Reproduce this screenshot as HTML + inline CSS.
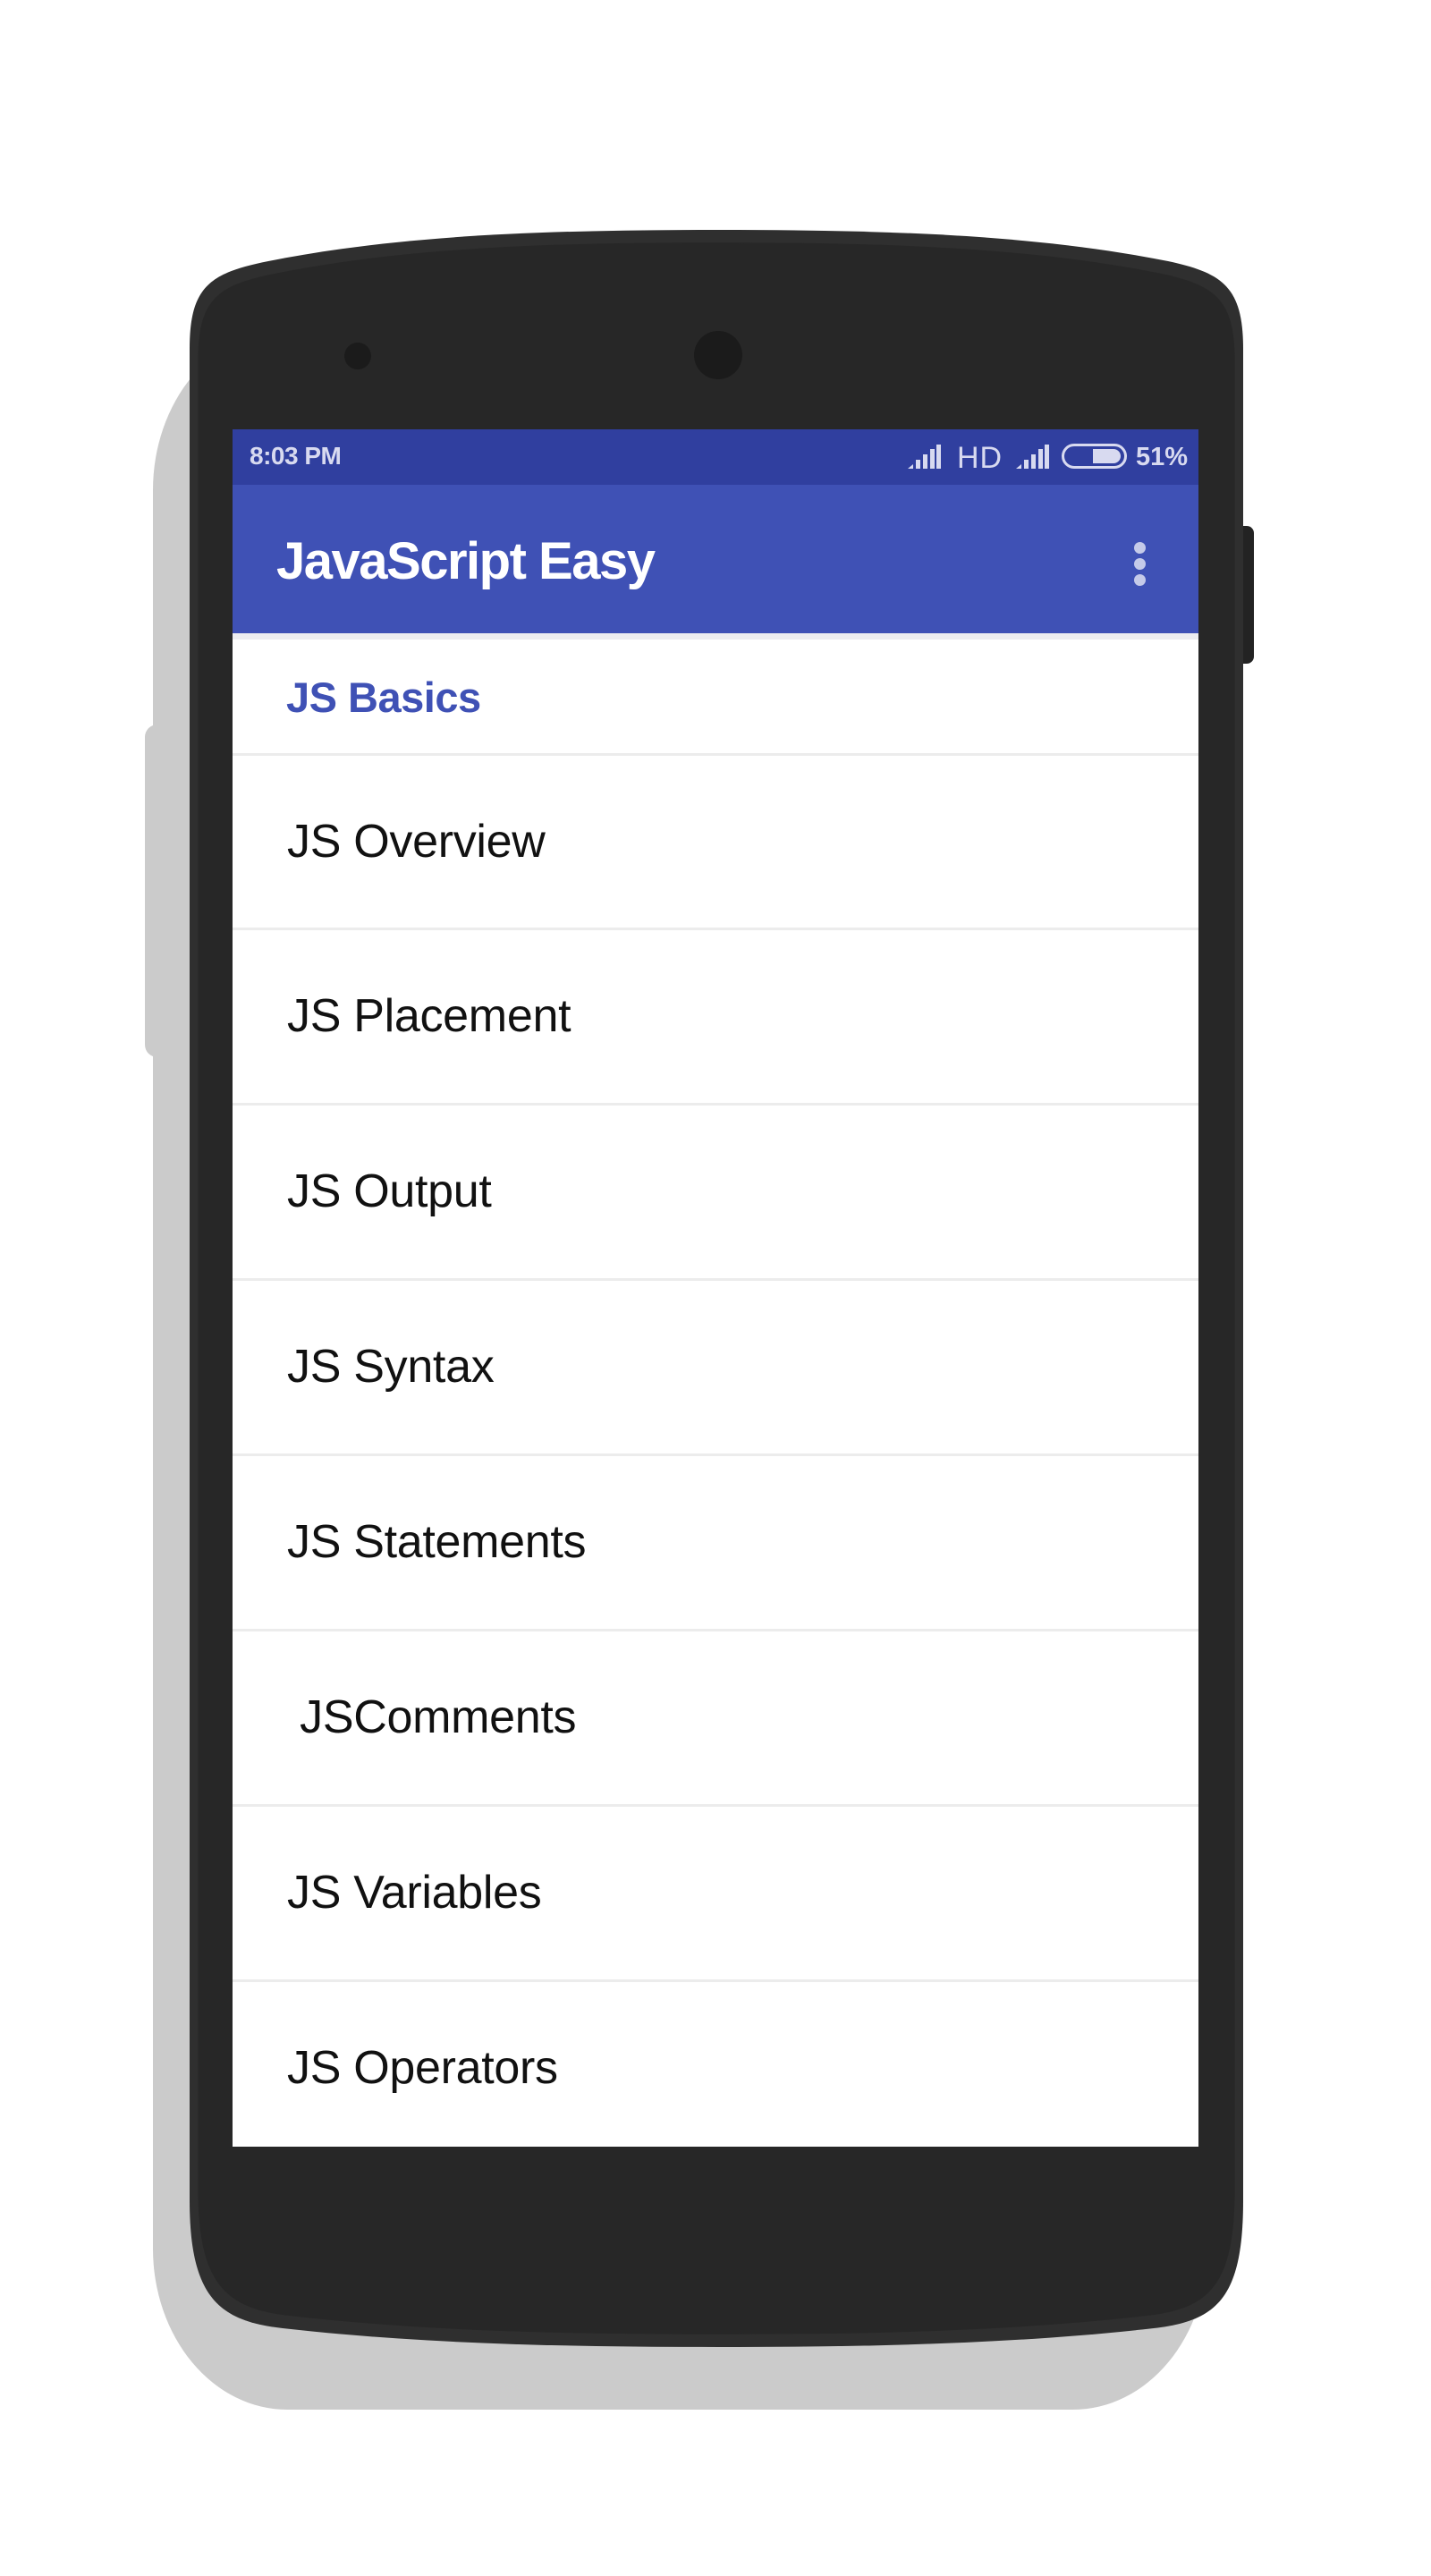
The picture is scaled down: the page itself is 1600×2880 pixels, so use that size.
<!DOCTYPE html>
<html><head><meta charset="utf-8"><style>
*{margin:0;padding:0;box-sizing:border-box}
body{width:1600px;height:2880px;background:#fff;position:relative;overflow:hidden;font-family:"Liberation Sans",sans-serif}
.abs{position:absolute}
.shtab{left:162px;top:810px;width:40px;height:372px;background:#cbcbcb;border-radius:14px}
.btnL{left:202px;top:745px;width:14px;height:368px;background:#232323;border-radius:8px 0 0 8px}
.btnR{left:1388px;top:588px;width:14px;height:154px;background:#232323;border-radius:0 8px 8px 0}
.screen{left:260px;top:480px;width:1080px;height:1920px;background:#fff;overflow:hidden}
.status{position:absolute;left:0;top:0;width:1080px;height:62px;background:#303f9f;color:#d8daf0}
.appbar{position:absolute;left:0;top:62px;width:1080px;height:166px;background:#3f51b5}
.row{position:absolute;left:0;width:1080px;height:196px;border-top:3px solid #ececec;font-size:52px;color:#111;line-height:193px;padding-left:61px;letter-spacing:-0.3px}
</style></head><body>
<div class="abs shtab"></div>
<div class="abs btnL"></div>
<div class="abs btnR"></div>
<svg class="abs" style="left:0;top:0" width="1600" height="2880" viewBox="0 0 1600 2880">
<rect x="171" y="368" width="1179" height="2326" rx="150" ry="180" fill="#cbcbcb"/>
<path d="M212,390 C212,320 235,305 300,292 C450,262 620,257 803,257 C986,257 1156,262 1306,292 C1366,305 1390,320 1390,390 L1390,2460 C1390,2570 1360,2595 1290,2603 C1140,2620 980,2624 803,2624 C626,2624 466,2620 316,2603 C246,2595 212,2570 212,2460 Z" fill="#2f2f2f"/>
<path d="M212,390 C212,320 235,305 300,292 C450,262 620,257 803,257 C986,257 1156,262 1306,292 C1366,305 1390,320 1390,390 L1390,2460 C1390,2570 1360,2595 1290,2603 C1140,2620 980,2624 803,2624 C626,2624 466,2620 316,2603 C246,2595 212,2570 212,2460 Z" fill="#272727" transform="translate(801,1440) scale(0.984,0.988) translate(-801,-1440)"/>
<circle cx="400" cy="398" r="15" fill="#1b1b1b"/>
<circle cx="803" cy="397" r="27" fill="#1b1b1b"/>
</svg>
<div class="abs screen">
 <div class="status">
  <div class="abs" style="left:19px;top:14px;font-size:28px;font-weight:bold;letter-spacing:-0.5px">8:03 PM</div>
  <svg class="abs" style="left:755px;top:17px" width="40" height="28" viewBox="0 0 40 28"><g fill="#d8daf0"><polygon points="0,27 6,22 6,27"/><rect x="9" y="17" width="5" height="10"/><rect x="17" y="11" width="5" height="16"/><rect x="25" y="5" width="5" height="22"/><rect x="32" y="0" width="5" height="27"/></g></svg>
  <div class="abs" style="left:810px;top:13px;font-size:34px;letter-spacing:1px">HD</div>
  <svg class="abs" style="left:876px;top:17px" width="40" height="28" viewBox="0 0 40 28"><g fill="#d8daf0"><polygon points="0,27 6,22 6,27"/><rect x="9" y="17" width="5" height="10"/><rect x="17" y="11" width="5" height="16"/><rect x="25" y="5" width="5" height="22"/><rect x="32" y="0" width="5" height="27"/></g></svg>
  <svg class="abs" style="left:927px;top:16px" width="74" height="28" viewBox="0 0 74 28"><rect x="1.5" y="1.5" width="70" height="25" rx="12.5" fill="none" stroke="#d8daf0" stroke-width="3"/><path d="M35 6 H58 a8 8 0 0 1 0 16 H35 Z" fill="#d8daf0"/></svg>
  <div class="abs" style="left:1010px;top:15px;font-size:29px;font-weight:bold">51%</div>
 </div>
 <div class="appbar">
  <div class="abs" style="left:49px;top:52px;font-size:58px;color:#fff;font-weight:bold;letter-spacing:-1.5px">JavaScript Easy</div>
  <div class="abs" style="left:1008px;top:64px;width:13px;height:13px;border-radius:50%;background:#c5cae9"></div>
  <div class="abs" style="left:1008px;top:82px;width:13px;height:13px;border-radius:50%;background:#c5cae9"></div>
  <div class="abs" style="left:1008px;top:100px;width:13px;height:13px;border-radius:50%;background:#c5cae9"></div>
 </div>
 <div class="abs" style="left:0;top:228px;width:1080px;height:7px;background:#ececf0"></div>
 <div class="abs" style="left:60px;top:272px;font-size:47px;font-weight:bold;color:#3f51b5;letter-spacing:-0.5px">JS Basics</div>
 <div class="row" style="top:362px">JS Overview</div>
 <div class="row" style="top:557px">JS Placement</div>
 <div class="row" style="top:753px">JS Output</div>
 <div class="row" style="top:949px">JS Syntax</div>
 <div class="row" style="top:1145px">JS Statements</div>
 <div class="row" style="top:1341px">&nbsp;JSComments</div>
 <div class="row" style="top:1537px">JS Variables</div>
 <div class="row" style="top:1733px">JS Operators</div>
</div>
</body></html>
